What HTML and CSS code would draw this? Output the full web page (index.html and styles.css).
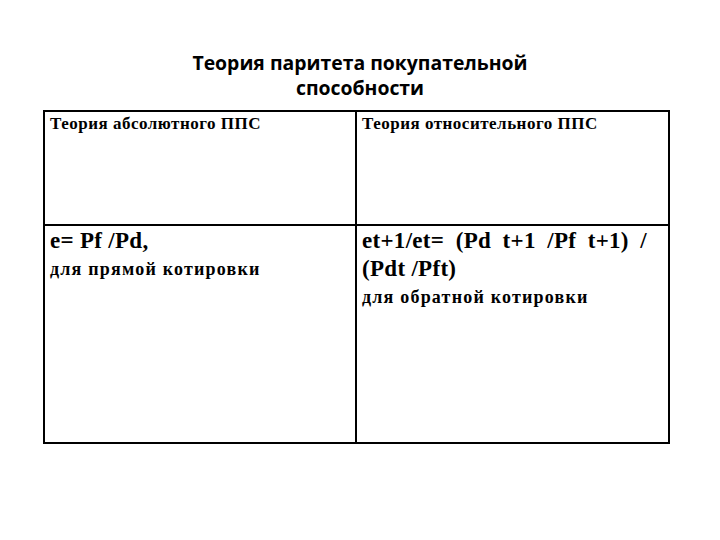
FILE: index.html
```html
<!DOCTYPE html>
<html lang="ru">
<head>
<meta charset="utf-8">
<link rel="stylesheet" href="styles.css">
</head>
<body>
<div class="slide">
  <h1 class="title">Теория паритета покупательной<br>способности</h1>
  <div class="grid">
    <div class="cell head">Теория абсолютного ППС</div>
    <div class="cell head right">Теория относительного ППС</div>
    <div class="cell bottom">
      <div class="formula">e= Pf /Pd,</div>
      <div class="note">для прямой котировки</div>
    </div>
    <div class="cell bottom right">
      <div class="formula justified">et+1/et= (Pd t+1 /Pf t+1) /</div>
      <div class="formula">(Pdt /Pft)</div>
      <div class="note">для обратной котировки</div>
    </div>
  </div>
</div>
</body>
</html>
```

FILE: styles.css
```css
html, body {
  margin: 0;
  padding: 0;
  background: #ffffff;
}
.slide {
  width: 720px;
  height: 540px;
  padding-top: 50px;
  box-sizing: border-box;
}
.title {
  margin: 0;
  font-family: "Open Sans", "Noto Sans", sans-serif;
  font-weight: 700;
  font-size: 19.4px;
  line-height: 25px;
  text-align: center;
  color: #000;
}
.grid {
  margin: 10px 0 0 43px;
  width: 627px;
  height: 334px;
  box-sizing: border-box;
  display: grid;
  grid-template-columns: 310px 313px;
  grid-template-rows: 114px 216px;
  border: 2px solid #000;
  font-family: "Liberation Serif", "Times New Roman", serif;
  font-weight: 700;
  color: #000;
}
.cell {
  padding: 2px 6px 0 5px;
}
.right {
  border-left: 2px solid #000;
}
.head {
  font-size: 17px;
  line-height: 20px;
  letter-spacing: 0.5px;
  border-bottom: 2px solid #000;
}
.bottom {
  padding-top: 1px;
}
.formula {
  font-size: 23px;
  line-height: 28px;
  letter-spacing: 0.3px;
}
.justified {
  text-align: justify;
  text-align-last: justify;
  margin-right: 15px;
}
.note {
  font-size: 18px;
  line-height: 20px;
  letter-spacing: 1.2px;
  margin-top: 4px;
}
```
